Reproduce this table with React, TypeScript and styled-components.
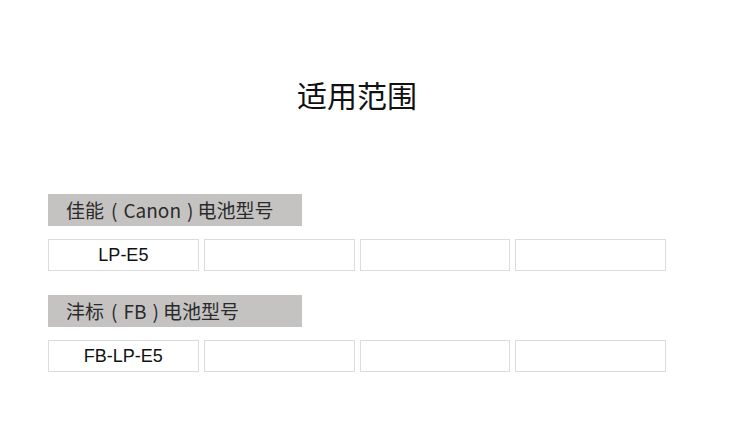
import React from "react";
import styled, { createGlobalStyle } from "styled-components";

const Global = createGlobalStyle`
  html, body { margin: 0; padding: 0; background: #ffffff; }
  body { font-family: "Noto Sans CJK SC", "Noto Sans", sans-serif; color: #222; }
`;

const Page = styled.div`
  width: 618px;
  padding: 74px 0 0 48px;
`;

const Title = styled.h1`
  margin: 0 0 80px;
  text-align: center;
  font-size: 30px;
  font-weight: 400;
  line-height: 40px;
  color: #111;
  font-family: "Noto Sans CJK SC", sans-serif;
`;

const Section = styled.section`
  margin-bottom: 24px;
`;

const Header = styled.div`
  width: 254px;
  height: 32px;
  box-sizing: border-box;
  padding-left: 18px;
  background: #c5c3c2;
  font-size: 19px;
  line-height: 32px;
  color: #2a2a2a;
  white-space: nowrap;
  margin-bottom: 13px;
`;

const Paren = styled.span<{ $before: number; $after: number }>`
  margin-left: ${(p) => p.$before}px;
  margin-right: ${(p) => p.$after}px;
`;

const Grid = styled.div`
  display: grid;
  grid-template-columns: repeat(4, 1fr);
  column-gap: 5px;
`;

const Cell = styled.div`
  height: 32px;
  box-sizing: border-box;
  border: 1px solid #dcdcdc;
  display: flex;
  align-items: center;
  justify-content: center;
  font-family: "Liberation Sans", Arial, sans-serif;
  font-size: 18px;
  color: #111;
`;

const sections = [
  { brand: "佳能", code: "Canon", models: ["LP-E5", "", "", ""] },
  { brand: "沣标", code: "FB", models: ["FB-LP-E5", "", "", ""] },
];

export default function App() {
  return (
    <>
      <Global />
      <Page>
        <Title>适用范围</Title>
        {sections.map((s) => (
          <Section key={s.brand}>
            <Header>
              {s.brand}
              <Paren $before={7} $after={6}>(</Paren>
              {s.code}
              <Paren $before={6} $after={4}>)</Paren>
              电池型号
            </Header>
            <Grid>
              {s.models.map((m, i) => (
                <Cell key={i}>{m}</Cell>
              ))}
            </Grid>
          </Section>
        ))}
      </Page>
    </>
  );
}
